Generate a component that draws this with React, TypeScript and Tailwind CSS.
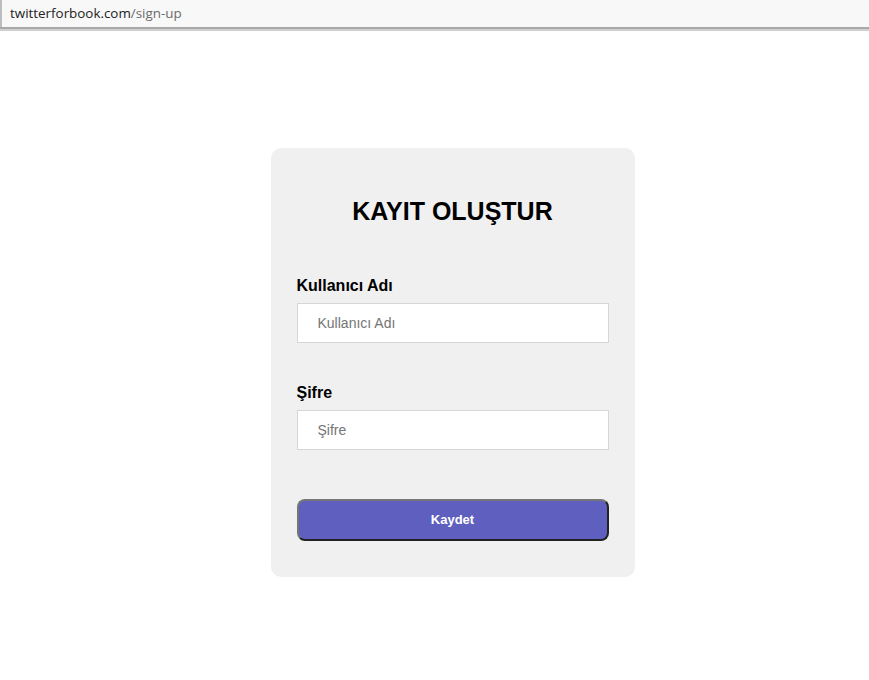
export default function App() {
  return (
    <div className="min-h-[680px] bg-white" style={{ fontFamily: '"Liberation Sans", Arial, sans-serif' }}>
      {/* address bar */}
      <div className="flex h-[27px] items-center border-l-2 border-[#bdbdbd] bg-[#f8f8f8] pl-[8px] text-[13.4px]" style={{ fontFamily: '"Open Sans", "Liberation Sans", sans-serif' }}>
        <span className="text-[#222]">twitterforbook.com</span>
        <span className="text-[#6b6b6b]">/sign-up</span>
      </div>
      <div className="h-[2px] bg-[#a9a9a9]" />
      <div className="h-[2px] bg-[#d0d0d0]" />

      <div className="flex justify-center pt-[117px] pl-[36px]">
        <form
          className="flex w-[364px] flex-col rounded-[10px] bg-[#f0f0f0] px-[26px] pt-[49px] pb-[36px]"
          onSubmit={(e) => e.preventDefault()}
        >
          <h1 className="text-center text-[25px] font-bold leading-[28px] text-black">KAYIT OLUŞTUR</h1>

          <label className="mt-[52px] text-[16px] font-bold leading-[18px] text-black">Kullanıcı Adı</label>
          <input
            className="mt-[8px] h-[40px] border border-[#d6d6d6] bg-white pl-[20px] text-[14px] text-black outline-none placeholder:text-[#757575]"
            placeholder="Kullanıcı Adı"
          />

          <label className="mt-[41px] text-[16px] font-bold leading-[18px] text-black">Şifre</label>
          <input
            type="password"
            className="mt-[8px] h-[40px] border border-[#d6d6d6] bg-white pl-[20px] text-[14px] text-black outline-none placeholder:text-[#757575]"
            placeholder="Şifre"
          />

          <button
            type="submit"
            className="mt-[49px] h-[42px] rounded-[8px] border-2 border-t-[#767676] border-l-[#767676] border-r-[#222] border-b-[#222] bg-[#5f5fbf] text-[13px] font-bold text-white"
          >
            Kaydet
          </button>
        </form>
      </div>
    </div>
  );
}
